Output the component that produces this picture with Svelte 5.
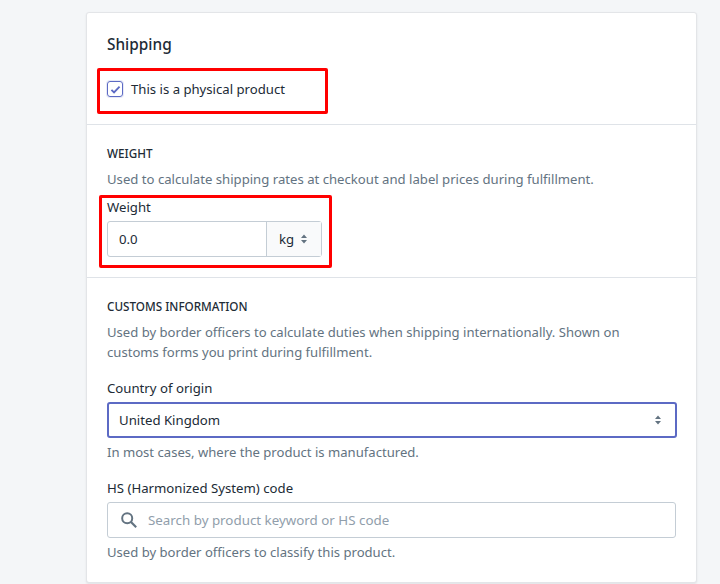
<script>
  const sectionHint = 'Used to calculate shipping rates at checkout and label prices during fulfillment.'
  const customsHint = 'Used by border officers to calculate duties when shipping internationally. Shown on customs forms you print during fulfillment.'
</script>

<div class="page">
  <div class="card">
    <section class="first">
      <h2>Shipping</h2>
      <label class="check">
        <span class="box">
          <svg viewBox="0 0 16 16" width="13" height="13"><path d="M3 8.5l3.2 3.2L13 4.5" fill="none" stroke="#5c6ac4" stroke-width="2.3" /></svg>
        </span>
        This is a physical product
      </label>
      <span class="mark mark-a"></span>
    </section>

    <section class="second">
      <h3>WEIGHT</h3>
      <p class="hint">{sectionHint}</p>
      <div class="label">Weight</div>
      <div class="weight">
        <div class="num">0.0</div>
        <div class="unit">kg <svg class="arrows" viewBox="0 0 8 12" width="8" height="12"><path d="M4 1.5L7 5H1zM4 10.5L1 7h6z" fill="#637381" /></svg></div>
      </div>
      <span class="mark mark-b"></span>
    </section>

    <section class="third">
      <h3>CUSTOMS INFORMATION</h3>
      <p class="hint customs">{customsHint}</p>
      <div class="label country">Country of origin</div>
      <div class="select">
        United Kingdom
        <svg class="arrows" viewBox="0 0 8 12" width="8" height="12"><path d="M4 1.5L7 5H1zM4 10.5L1 7h6z" fill="#637381" /></svg>
      </div>
      <p class="hint below">In most cases, where the product is manufactured.</p>
      <div class="label hs">HS (Harmonized System) code</div>
      <div class="search">
        <svg viewBox="0 0 20 20" width="18" height="18"><circle cx="8" cy="8" r="5.6" fill="none" stroke="#637381" stroke-width="2.2" /><path d="M12.2 12.2L18 18" stroke="#637381" stroke-width="2.4" /></svg>
        <span>Search by product keyword or HS code</span>
      </div>
      <p class="hint below">Used by border officers to classify this product.</p>
    </section>
  </div>
</div>

<style>
  :global(body) {
    margin: 0;
    background: #f4f6f8;
    font-family: "Noto Sans", "Open Sans", sans-serif;
    color: #212b36;
  }
  .page {
    height: 584px;
    overflow: hidden;
    padding: 12px 23px 0 86px;
    box-sizing: border-box;
  }
  .card {
    width: 611px;
    height: 571px;
    box-sizing: border-box;
    background: #fff;
    border: 1px solid #e3e5e8;
    border-radius: 3px;
    box-shadow: 0 1px 2px rgba(63,63,68,0.1);
  }
  section {
    position: relative;
    padding: 0 20px;
    border-bottom: 1px solid #dfe3e8;
    box-sizing: border-box;
  }
  .first { height: 112px; padding-top: 21px; }
  .second { height: 153px; padding-top: 20px; }
  .third { border-bottom: 0; padding-top: 20px; }
  h2 {
    margin: 0;
    font-size: 15.4px;
    line-height: 22px;
    font-weight: 500;
    color: #212b36;
  }
  h3 {
    margin: 0;
    font-size: 11.7px;
    line-height: 16px;
    font-weight: 500;
  }
  .check {
    display: flex;
    align-items: center;
    gap: 8px;
    margin-top: 23px;
    font-size: 13.15px;
    line-height: 20px;
    color: #212b36;
  }
  .box {
    width: 14px;
    height: 14px;
    border: 1px solid #5c6ac4;
    border-radius: 3px;
    display: flex;
    align-items: center;
    justify-content: center;
    box-shadow: 0 0 0 1px rgba(92,106,196,0.15);
  }
  .hint {
    margin: 8px 0 0;
    font-size: 13.1px;
    line-height: 20px;
    color: #637381;
  }
  .second .hint { font-size: 13.15px; }
  .customs { max-width: 530px; }
  .hint.below { margin-top: 4px; }
  .label {
    font-size: 13.2px;
    line-height: 20px;
    margin-top: 8px;
  }
  .label.country { margin-top: 16px; }
  .label.hs { margin-top: 16px; }
  .weight {
    display: flex;
    width: 215px;
    height: 36px;
    margin-top: 4px;
    box-sizing: border-box;
    border: 1px solid #c4cdd5;
    border-radius: 3px;
    font-size: 13.2px;
  }
  .num {
    flex: 1;
    padding-left: 11px;
    line-height: 34px;
  }
  .unit {
    width: 55px;
    box-sizing: border-box;
    border-left: 1px solid #c4cdd5;
    background: #f9fafb;
    display: flex;
    align-items: center;
    gap: 6px;
    padding-left: 12px;
  }
  .select {
    display: flex;
    align-items: center;
    justify-content: space-between;
    height: 36px;
    margin-top: 4px;
    padding: 0 13px 0 10px;
    box-sizing: border-box;
    border: 2px solid #5c6ac4;
    border-radius: 3px;
    font-size: 13.2px;
    width: 570px;
  }
  .search {
    display: flex;
    align-items: center;
    gap: 10px;
    height: 36px;
    margin-top: 4px;
    padding-left: 12px;
    width: 569px;
    box-sizing: border-box;
    border: 1px solid #c4cdd5;
    border-radius: 3px;
    font-size: 13.35px;
    color: #919eab;
  }
  .mark {
    position: absolute;
    border: 3px solid #f00;
    border-radius: 2px;
    box-sizing: border-box;
  }
  .mark-a { left: 10px; top: 55px; width: 231px; height: 46px; }
  .mark-b { left: 12px; top: 70px; width: 233px; height: 73px; }
</style>
